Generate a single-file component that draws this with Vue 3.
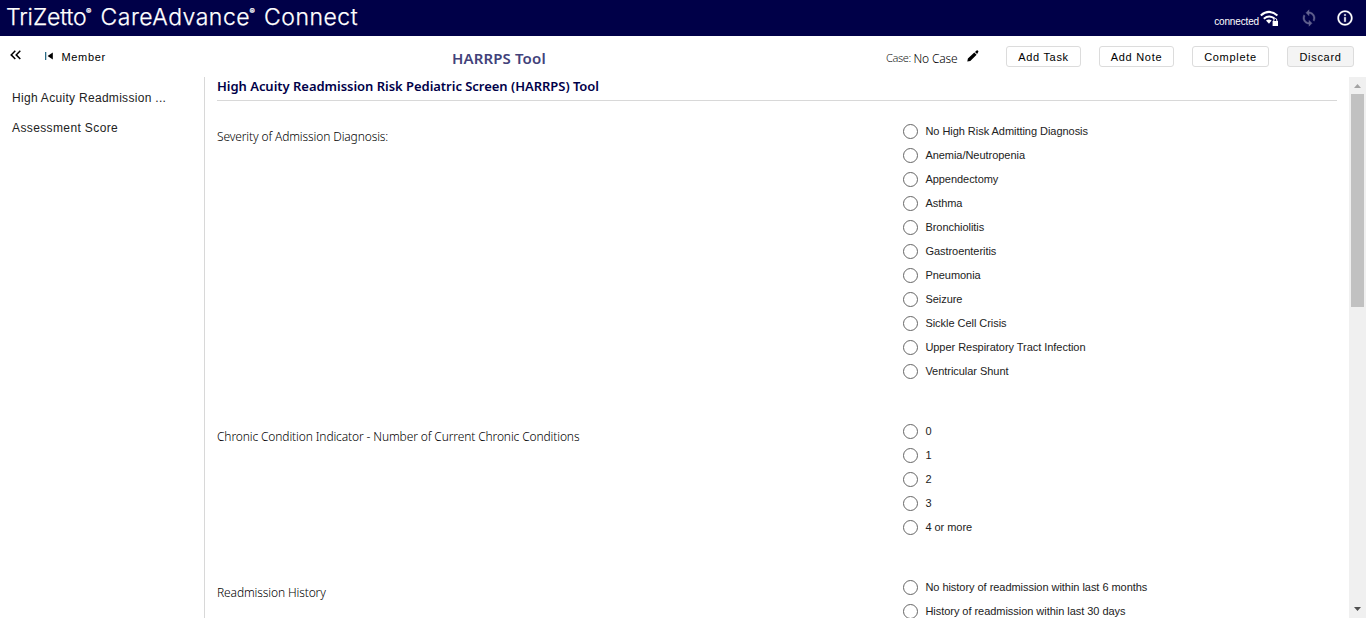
<script setup>
const sections = ['High Acuity Readmission ...', 'Assessment Score']
const questions = [
  {
    label: 'Severity of Admission Diagnosis:',
    options: [
      'No High Risk Admitting Diagnosis', 'Anemia/Neutropenia', 'Appendectomy', 'Asthma',
      'Bronchiolitis', 'Gastroenteritis', 'Pneumonia', 'Seizure', 'Sickle Cell Crisis',
      'Upper Respiratory Tract Infection', 'Ventricular Shunt',
    ],
  },
  {
    label: 'Chronic Condition Indicator - Number of Current Chronic Conditions',
    options: ['0', '1', '2', '3', '4 or more'],
  },
  {
    label: 'Readmission History',
    options: ['No history of readmission within last 6 months', 'History of readmission within last 30 days'],
  },
]
</script>

<template>
  <div class="app">
    <header class="topbar">
      <div class="brand">
        <span class="b1">TriZetto</span><span class="reg">®</span>
        <span class="b2">CareAdvance</span><span class="reg">®</span>
        <span class="b3">Connect</span>
      </div>
      <div class="status">
        <span class="connected">connected</span>
        <svg class="wifi" width="20" height="17" viewBox="0 0 20 17">
          <g fill="none" stroke="#fff" stroke-width="2">
            <path d="M0.8 5.4Q9 -1.6 17.4 5.4" />
            <path d="M3.8 8.7Q9 4.4 14.4 8.4" />
          </g>
          <path d="M6 10.6Q9 8.6 11.6 10.6L9 13.7Z" fill="#fff" />
          <rect x="12.6" y="11" width="5.400" height="5" fill="#fff" />
          <path d="M13.8 11V10a1.5 1.5 0 0 1 3 0v1" fill="none" stroke="#fff" />
        </svg>
        <svg class="sync" width="18" height="18" viewBox="0 0 24 24" fill="#62628f" stroke="#62628f" stroke-width=".6">
          <path d="M12 4V1L8 5l4 4V6c3.31 0 6 2.69 6 6 0 1.01-.25 1.97-.7 2.8l1.46 1.46C19.54 15.03 20 13.57 20 12c0-4.42-3.58-8-8-8zm0 14c-3.31 0-6-2.69-6-6 0-1.01.25-1.97.7-2.8L5.24 7.74C4.46 8.97 4 10.43 4 12c0 4.42 3.58 8 8 8v3l4-4-4-4v3z" />
        </svg>
        <svg class="info" width="18" height="18" viewBox="0 0 24 24" fill="#fff" stroke="#fff" stroke-width=".4">
          <path d="M11 17h2v-6h-2v6zm1-15C6.48 2 2 6.480 2 12s4.480 10 10 10 10-4.480 10-10S17.520 2 12 2zm0 18c-4.410 0-8-3.590-8-8s3.590-8 8-8 8 3.590 8 8-3.590 8-8 8zM11 9h2V7h-2v2z" />
        </svg>
      </div>
    </header>

    <div class="toolbar">
      <svg class="collapse" width="12" height="10" viewBox="0 0 12 10" fill="none" stroke="#000" stroke-width="1.5">
        <path d="M5.300 .8L1.200 4.900l4.100 4.100M10.300 .8L6.200 4.900l4.100 4.100" />
      </svg>
      <svg class="first" width="9" height="8" viewBox="0 0 9 8">
        <rect x="0" y="0" width="1.300" height="8" fill="#2b6b86" />
        <path d="M7.800 .4v7.200L2.600 4z" fill="#000" />
      </svg>
      <span class="member">Member</span>
      <h1>HARRPS Tool</h1>
      <span class="case-label">Case:</span>
      <span class="case-value">No Case</span>
      <svg class="pencil" width="12" height="12" viewBox="0 0 12 12">
        <path d="M.3 11.500l.6-3L7.300 2.500l2.300 2.300L3.300 10.900zM8 1.900L9.600.500Q10.300 0 11.100.8q.7.800 0 1.500L10.100 4z" fill="#000" />
      </svg>
      <button class="btn task">Add Task</button>
      <button class="btn note">Add Note</button>
      <button class="btn complete">Complete</button>
      <button class="btn discard">Discard</button>
    </div>

    <div class="body">
      <nav>
        <a v-for="s in sections" :key="s">{{ s }}</a>
      </nav>
      <main>
        <h2>High Acuity Readmission Risk Pediatric Screen (HARRPS) Tool</h2>
        <section v-for="q in questions" :key="q.label" class="question">
          <div class="q-label">{{ q.label }}</div>
          <div class="options">
            <label v-for="o in q.options" :key="o"><i class="radio"></i><span>{{ o }}</span></label>
          </div>
        </section>
      </main>
      <div class="scrollbar">
        <svg width="17" height="17" viewBox="0 0 17 17"><path d="M5 11h7L8.500 7z" fill="#a3a3a3" /></svg>
        <div class="thumb"></div>
        <svg class="down" width="17" height="17" viewBox="0 0 17 17"><path d="M5 6h7l-3.500 4z" fill="#505050" /></svg>
      </div>
    </div>
  </div>
</template>

<style>
html, body { overflow: hidden; }
</style>

<style scoped>
.app {
  width: 1366px;
  height: 618px;
  overflow: hidden;
  display: flex;
  flex-direction: column;
  background: #fff;
  font-family: "Liberation Sans", Arial, sans-serif;
}
.topbar {
  flex: none;
  height: 36px;
  background: #000048;
  color: #fff;
  display: flex;
  justify-content: space-between;
}
.brand {
  display: flex;
  padding-left: 6px;
  font-family: "Inter", sans-serif;
  font-size: 23px;
  font-weight: 300;
  line-height: 34px;
  white-space: nowrap;
  -webkit-text-stroke: 0.25px #fff;
}
.b1 { width: 80px; letter-spacing: -0.1px; }
.b2 { width: 149px; letter-spacing: 0.5px; }
.b3 { letter-spacing: 0.5px; }
.reg { width: 14.500px; font-size: 8px; line-height: 22px; font-weight: 600; }
.status { display: flex; align-items: flex-start; }
.connected { margin-top: 16px; font-size: 10px; line-height: 12px; letter-spacing: -0.15px; }
.wifi { margin: 10px 0 0 1px; }
.sync { margin: 9px 0 0 20px; }
.info { margin: 9px 12px 0 18px; }

.toolbar {
  flex: none;
  height: 41px;
  display: flex;
  align-items: flex-start;
  white-space: nowrap;
  color: #000;
}
.collapse { margin: 14px 0 0 9.500px; }
.first { margin: 16px 0 0 23.500px; }
.member { margin: 14px 0 0 7.500px; width: 390.500px; font-size: 11px; line-height: 14px; letter-spacing: 0.65px; }
h1 {
  margin: 12px 0 0;
  width: 434px;
  font: 600 15px/20px "Noto Sans", sans-serif;
  letter-spacing: 0.13px;
  color: #42427a;
}
.case-label { margin-top: 14px; width: 27.500px; font: 300 11px/16px "Noto Sans", sans-serif; letter-spacing: -0.4px; color: #222; }
.case-value { margin-top: 14px; width: 52.500px; font: 350 12px/18px "Noto Sans", sans-serif; letter-spacing: -0.15px; }
.pencil { margin: 14px 0 0 1px; }
.btn {
  flex: none;
  height: 21px;
  margin-top: 10px;
  padding: 1px 0 0;
  border: 1px solid #dcdcdc;
  border-radius: 3px;
  background: #fff;
  color: #000;
  font: 11px/18px "Liberation Sans", Arial, sans-serif;
  letter-spacing: 0.7px;
}
.task { width: 75px; margin-left: 27px; }
.note { width: 75px; margin-left: 18px; }
.complete { width: 77px; margin-left: 18px; }
.discard { width: 67px; margin-left: 18px; background: #f4f4f4; }

.body { flex: 1; min-height: 0; display: flex; }
nav {
  flex: none;
  width: 205px;
  padding: 6px 0 0 12px;
  box-sizing: border-box;
  border-right: 1px solid #d8d8d8;
}
nav a { display: block; font-size: 12px; line-height: 30px; letter-spacing: 0.3px; color: #222; }
nav a + a { letter-spacing: 0.38px; }
main { width: 1120px; margin: 0 12px; flex: none; overflow: hidden; }
h2 {
  margin: 0 0 18px;
  height: 23px;
  border-bottom: 1px solid #d8d8d8;
  font: 600 13px/18px "Noto Sans", sans-serif;
  letter-spacing: -0.03px;
  color: #000048;
  white-space: nowrap;
}
.question { display: flex; margin-bottom: 36px; }
.q-label {
  width: 686px;
  padding-top: 9px;
  font: 300 12px/18px "Noto Sans", sans-serif;
  letter-spacing: -0.12px;
  color: #000;
}
.options label { display: flex; align-items: center; height: 24px; font-size: 11px; letter-spacing: -0.04px; color: #222; white-space: nowrap; }
.radio { width: 13px; height: 13px; border: 1px solid #666; border-radius: 50%; margin-right: 7.400px; }
.scrollbar { flex: none; width: 17px; background: #f0f0f0; display: flex; flex-direction: column; align-items: center; }
.scrollbar svg { display: block; }
.thumb { width: 13px; height: 213px; background: #c1c1c1; }
.down { margin-top: auto; }
</style>
